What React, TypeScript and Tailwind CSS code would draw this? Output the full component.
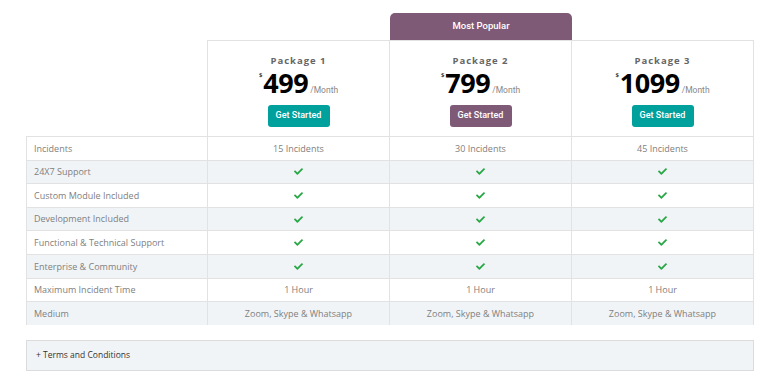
import { Fragment } from "react"

const packages = [
  { name: "Package 1", price: "499", incidents: "15 Incidents", popular: false },
  { name: "Package 2", price: "799", incidents: "30 Incidents", popular: true },
  { name: "Package 3", price: "1099", incidents: "45 Incidents", popular: false },
]

const rows: { label: string; value: string | null }[] = [
  { label: "24X7 Support", value: null },
  { label: "Custom Module Included", value: null },
  { label: "Development Included", value: null },
  { label: "Functional & Technical Support", value: null },
  { label: "Enterprise & Community", value: null },
  { label: "Maximum Incident Time", value: "1 Hour" },
  { label: "Medium", value: "Zoom, Skype & Whatsapp" },
]

function Check() {
  return (
    <svg viewBox="0 0 512 512" className="w-[9px] h-[9px] fill-[#28a745]">
      <path d="M173.898 439.404l-166.4-166.4c-9.997-9.997-9.997-26.206 0-36.204l36.203-36.204c9.997-9.998 26.207-9.998 36.204 0L192 312.69 432.095 72.596c9.997-9.997 26.207-9.997 36.204 0l36.203 36.204c9.997 9.997 9.997 26.206 0 36.204l-294.4 294.401c-9.998 9.997-26.207 9.997-36.204-.001z" />
    </svg>
  )
}

export default function App() {
  const allRows = [{ label: "Incidents", value: "__incidents" }, ...rows]

  return (
    <div className="min-h-screen bg-white pt-[13px] pl-[26px] font-['Open_Sans',sans-serif]">
      <div className="grid grid-cols-[182px_182px_182px_182px] w-[728px]">
        {/* Most Popular tab */}
        <div className="h-[27px]" />
        {packages.map((p) =>
          p.popular ? (
            <div
              key={p.name}
              className="h-[27px] bg-[#7f5a76] rounded-t-[5px] flex items-center justify-center text-white text-[9.5px] font-medium font-['Roboto',sans-serif]"
            >
              Most Popular
            </div>
          ) : (
            <div key={p.name} className="h-[27px]" />
          )
        )}

        {/* Header */}
        <div className="h-[96px] border-r border-[#e2e2e2]" />
        {packages.map((p) => (
          <div
            key={p.name}
            className="h-[96px] border-t border-r border-[#e2e2e2] flex flex-col items-center pt-[14px]"
          >
            <div className="text-[9.5px] leading-[12px] font-bold tracking-[1px] text-[#666]">{p.name}</div>
            <div className="flex items-baseline h-[30px] overflow-visible leading-[30px] mt-[1px]">
              <span className="self-start text-[6px] leading-[10px] mt-[2px] mr-[1px] text-[#333] font-bold">$</span>
              <span className="text-[27px] font-bold text-black tracking-[-0.5px]">{p.price}</span>
              <span className="text-[8.5px] text-[#888] ml-[2px] font-['Roboto',sans-serif]">/Month</span>
            </div>
            <button
              className={`mt-[7px] w-[62px] h-[22px] rounded-[3px] text-white text-[9px] font-medium font-['Roboto',sans-serif] ${
                p.popular ? "bg-[#7f5a76]" : "bg-[#00a09d]"
              }`}
            >
              Get Started
            </button>
          </div>
        ))}

        {/* Feature rows */}
        {allRows.map((r, i) => {
          const bg = i % 2 === 1 ? "bg-[#f1f4f7]" : "bg-white"
          return (
            <Fragment key={r.label}>
              <div
                className={`h-[23.6px] ${bg} border-l border-r border-t border-[#e2e2e2] flex items-center pl-[7px] text-[9px] text-[#808080]`}
              >
                {r.label}
              </div>
              {packages.map((p) => (
                <div
                  key={p.name}
                  className={`h-[23.6px] ${bg} border-r border-t border-[#e2e2e2] flex items-center justify-center text-[9px] text-[#808080]`}
                >
                  {r.value === "__incidents" ? p.incidents : r.value ?? <Check />}
                </div>
              ))}
            </Fragment>
          )
        })}
      </div>

      {/* Terms */}
      <div className="mt-[15px] w-[728px] h-[31px] bg-[#f1f4f7] border border-[#dcdcdc] flex items-center pl-[9px] text-[8.5px] text-[#333] font-['Open_Sans',sans-serif]">
        + Terms and Conditions
      </div>
    </div>
  )
}
